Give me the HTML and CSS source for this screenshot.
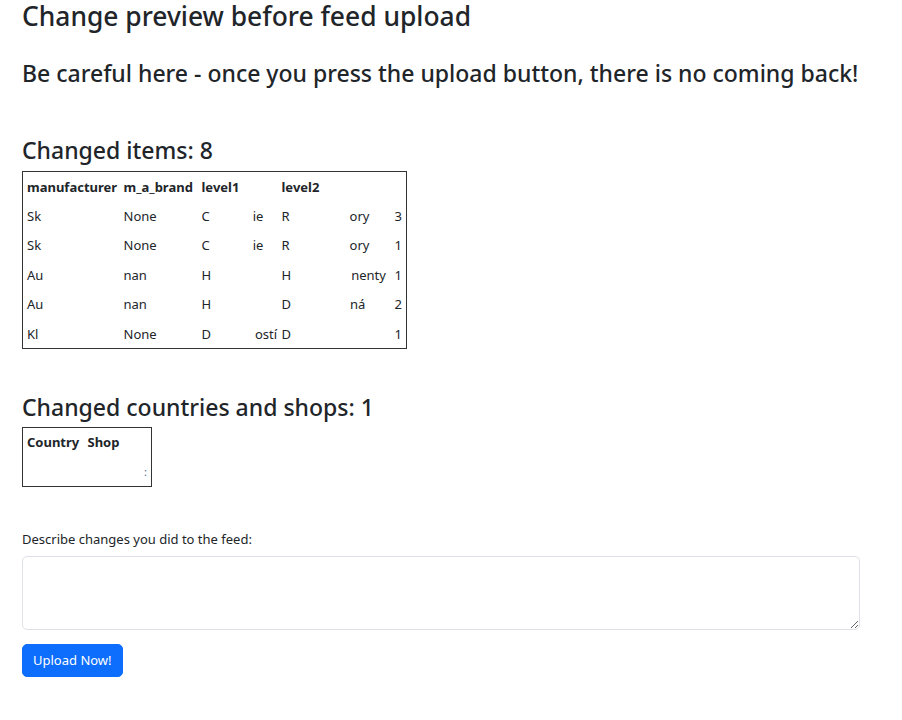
FILE: index.html
```html
<!DOCTYPE html>
<html lang="en">

<head>
    <meta charset="UTF-8">
    <meta name="viewport" content="width=device-width, initial-scale=1.0">
    <title>Change preview</title>
    <link rel="stylesheet" href="styles.css">
</head>

<body>
    <div class="page">
        <h1 class="page-title">Change preview before feed upload</h1>
        <h2 class="warning">Be careful here - once you press the upload button, there is no coming back!</h2>

        <h3 class="section-title">Changed items: 8</h3>
        <table class="preview-table items-table">
            <colgroup>
                <col style="width: 97px">
                <col style="width: 78px">
                <col style="width: 80px">
                <col style="width: 110px">
                <col>
            </colgroup>
            <thead>
                <tr>
                    <th>manufacturer</th>
                    <th>m_a_brand</th>
                    <th>level1</th>
                    <th>level2</th>
                    <th></th>
                </tr>
            </thead>
            <tbody>
                <tr>
                    <td>Sk</td>
                    <td>None</td>
                    <td><span class="head">C</span><span class="tail t1">ie</span></td>
                    <td><span class="head">R</span><span class="tail t2">ory</span></td>
                    <td class="num">3</td>
                </tr>
                <tr>
                    <td>Sk</td>
                    <td>None</td>
                    <td><span class="head">C</span><span class="tail t1">ie</span></td>
                    <td><span class="head">R</span><span class="tail t2">ory</span></td>
                    <td class="num">1</td>
                </tr>
                <tr>
                    <td>Au</td>
                    <td>nan</td>
                    <td>H</td>
                    <td><span class="head">H</span><span class="tail t3">nenty</span></td>
                    <td class="num">1</td>
                </tr>
                <tr>
                    <td>Au</td>
                    <td>nan</td>
                    <td>H</td>
                    <td><span class="head">D</span><span class="tail t4">ná</span></td>
                    <td class="num">2</td>
                </tr>
                <tr>
                    <td>Kl</td>
                    <td>None</td>
                    <td><span class="head">D</span><span class="tail t5">ostí</span></td>
                    <td>D</td>
                    <td class="num">1</td>
                </tr>
            </tbody>
        </table>

        <h3 class="section-title">Changed countries and shops: 1</h3>
        <table class="preview-table shops-table">
            <colgroup>
                <col style="width: 61px">
                <col>
            </colgroup>
            <thead>
                <tr>
                    <th>Country</th>
                    <th>Shop</th>
                </tr>
            </thead>
            <tbody>
                <tr>
                    <td></td>
                    <td class="num"><span class="dots">:</span></td>
                </tr>
            </tbody>
        </table>

        <form class="upload-form">
            <label class="form-label" for="changes">Describe changes you did to the feed:</label>
            <textarea class="form-control" id="changes" rows="3"></textarea>
            <button class="btn-primary" type="button">Upload Now!</button>
        </form>
    </div>
</body>

</html>
```

FILE: styles.css
```css
body {
    margin: 0;
    font-family: "Noto Sans", "Open Sans", sans-serif;
    color: #212529;
    background: #fff;
}

.page {
    padding: 0 22px;
}

.page-title {
    font-size: 26.4px;
    font-weight: 500;
    line-height: 1.25;
    margin: 0;
}

.warning {
    font-size: 23px;
    font-weight: 500;
    line-height: 1.2;
    margin: 27px 0 0;
}

.section-title {
    font-size: 23px;
    font-weight: 500;
    line-height: 1.2;
    margin: 49px 0 7px;
}

.preview-table + .section-title {
    margin-top: 45px;
}

.shops-table {
    margin-top: -2px;
}

.preview-table {
    border-collapse: collapse;
    table-layout: fixed;
    border: 1px solid #333;
    font-size: 13px;
}

.items-table {
    width: 385px;
}

.shops-table {
    width: 130px;
}

.preview-table th,
.preview-table td {
    height: 29.5px;
    padding: 0 4px;
    text-align: left;
    white-space: nowrap;
    box-sizing: border-box;
}

.preview-table th {
    font-weight: 700;
}

.preview-table td {
    font-weight: 400;
}

.preview-table .num {
    text-align: right;
}

.head,
.tail {
    display: inline-block;
}

.t1 {
    margin-left: 43px;
}

.t2 {
    margin-left: 60px;
}

.t3 {
    margin-left: 60px;
}

.t4 {
    margin-left: 59px;
}

.t5 {
    margin-left: 44px;
}

.dots {
    color: #4a6a8a;
    font-size: 11px;
}

.upload-form {
    display: flex;
    flex-direction: column;
    align-items: flex-start;
    margin-top: 43px;
}

.form-label {
    font-size: 13px;
    margin-bottom: 8px;
}

.form-control {
    width: 838px;
    height: 74px;
    box-sizing: border-box;
    border: 1px solid #dee2e6;
    border-radius: 5px;
    font-family: inherit;
    font-size: 13px;
    padding: 5px 10px;
    resize: vertical;
}

.btn-primary {
    margin-top: 14px;
    background: #0d6efd;
    color: #fff;
    border: 1px solid #0d6efd;
    border-radius: 5px;
    font-family: inherit;
    font-size: 13px;
    height: 33px;
    padding: 0 10px;
    cursor: pointer;
}
```
